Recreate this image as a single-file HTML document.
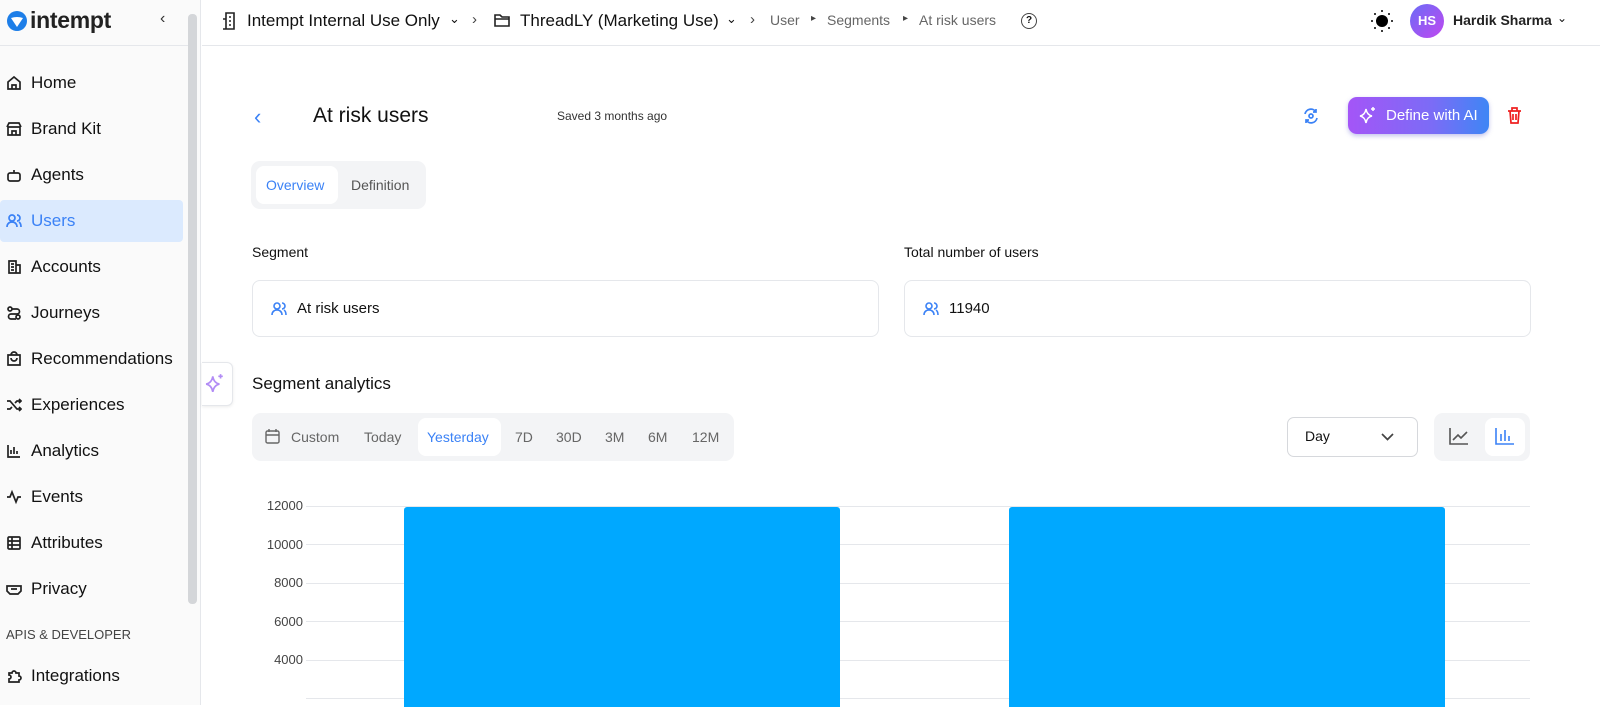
<!DOCTYPE html>
<html><head><meta charset="utf-8"><style>
*{box-sizing:border-box;margin:0;padding:0}
body{width:1600px;height:705px;overflow:hidden;background:#fff;font-family:"Liberation Sans",sans-serif;color:#111;position:relative}
.abs{position:absolute}
.side{left:0;top:0;width:201px;height:705px;background:#fafafa;border-right:1px solid #e5e7eb}
.nav{position:absolute;left:0;width:183px;height:42px;display:flex;align-items:center;font-size:17px;color:#111;padding-left:6px}
.nav svg{width:16px;height:16px;margin-right:9px;stroke:#222;fill:none;stroke-width:1.7}
.nav.act{background:#dbeafe;color:#3b82f6;border-radius:4px}
.nav.act svg{stroke:#3b82f6}
.t{position:absolute;white-space:nowrap}
.box{position:absolute;border:1px solid #e5e7eb;border-radius:8px;height:57px;display:flex;align-items:center;padding-left:18px;font-size:15px}
.box svg{width:16px;height:16px;stroke:#3b82f6;fill:none;stroke-width:1.6;margin-right:10px}
.grid{position:absolute;left:306px;width:1224px;height:1px;background:#e5e7eb}
.yl{position:absolute;right:1297px;font-size:13px;color:#444}
</style></head><body>
<div class="abs side">
  <svg class="abs" style="left:6px;top:10px" width="22" height="22" viewBox="0 0 22 22"><circle cx="11" cy="11" r="10" fill="#1d7ee8"/><path d="M5 8 Q11 6 17 8 L11 17Z" fill="#fff"/></svg>
  <div class="t" style="left:30px;top:7px;font-size:23px;font-weight:bold;color:#222;letter-spacing:-0.3px">intempt</div>
  <div class="t" style="left:160px;top:10px;font-size:16px;color:#333">‹</div>
  <div class="abs" style="left:0;top:45px;width:188px;height:1px;background:#e5e7eb"></div>
  <div class="abs" style="left:188px;top:14px;width:9px;height:590px;background:#d4d6d9;border-radius:4px"></div>
  <div class="nav" style="top:62px"><svg viewBox="0 0 16 16"><path d="M2 7L8 2l6 5v7H2z M6 14v-4h4v4"/></svg>Home</div>
  <div class="nav" style="top:108px"><svg viewBox="0 0 16 16"><path d="M2 6h12v8H2z M1 6l2-4h10l2 4 M6 14v-4h4v4"/></svg>Brand Kit</div>
  <div class="nav" style="top:154px"><svg viewBox="0 0 16 16"><rect x="2" y="6" width="12" height="8" rx="2"/><path d="M8 3v3 M6 10h0 M10 10h0"/></svg>Agents</div>
  <div class="nav act" style="top:200px"><svg viewBox="0 0 16 16"><circle cx="6" cy="5" r="3"/><path d="M1 14c0-3 2-5 5-5s5 2 5 5 M11 2a3 3 0 010 6 M13 9c1.5 1 2 3 2 5"/></svg>Users</div>
  <div class="nav" style="top:246px"><svg viewBox="0 0 16 16"><path d="M3 2h7v12H3z M10 6h4v8h-4 M5 5h3 M5 8h3 M5 11h3"/></svg>Accounts</div>
  <div class="nav" style="top:292px"><svg viewBox="0 0 16 16"><circle cx="4" cy="4" r="2"/><circle cx="12" cy="12" r="2"/><path d="M6 4h5a2.5 2.5 0 010 5H5a2.5 2.5 0 000 5h5"/></svg>Journeys</div>
  <div class="nav" style="top:338px"><svg viewBox="0 0 16 16"><path d="M2 4h12v10H2z M5 4a3 3 0 016 0 M5 7a3 3 0 006 0"/></svg>Recommendations</div>
  <div class="nav" style="top:384px"><svg viewBox="0 0 16 16"><path d="M1 4h3l7 8h4 M1 12h3l2-2 M9 6l2-2h4 M13 2l2 2-2 2 M13 10l2 2-2 2"/></svg>Experiences</div>
  <div class="nav" style="top:430px"><svg viewBox="0 0 16 16"><path d="M2 2v12h12 M5 11V7 M8 11V4 M11 11V8"/></svg>Analytics</div>
  <div class="nav" style="top:476px"><svg viewBox="0 0 16 16"><path d="M1 8h3l2-5 4 10 2-5h3"/></svg>Events</div>
  <div class="nav" style="top:522px"><svg viewBox="0 0 16 16"><rect x="2" y="2" width="12" height="12" rx="1"/><path d="M2 6h12 M2 10h12 M6 2v12"/></svg>Attributes</div>
  <div class="nav" style="top:568px"><svg viewBox="0 0 16 16"><path d="M1 5h14v5l-3 3H4l-3-3z M5 8h6"/></svg>Privacy</div>
  <div class="t" style="left:6px;top:627px;font-size:13px;color:#444">APIS &amp; DEVELOPER</div>
  <div class="nav" style="top:655px"><svg viewBox="0 0 16 16"><path d="M3 5h3a2 2 0 014 0h3v3a2 2 0 010 4v2H3v-3a2 2 0 000-4z"/></svg>Integrations</div>
</div>

<div class="abs" style="left:202px;top:45px;width:1398px;height:1px;background:#e5e7eb"></div>
<svg class="abs" style="left:222px;top:12px" width="16" height="18" viewBox="0 0 16 18" fill="none" stroke="#222" stroke-width="1.6"><path d="M4 1h8v16H4z M1 7h3v10H1 M7 5h2 M7 9h2 M7 13h2"/></svg>
<div class="t" style="left:247px;top:11px;font-size:17px">Intempt Internal Use Only</div>
<div class="t" style="left:449px;top:11px;font-size:13px">⌄</div>
<div class="t" style="left:472px;top:11px;font-size:15px;color:#444">›</div>
<svg class="abs" style="left:494px;top:13px" width="17" height="15" viewBox="0 0 17 15" fill="none" stroke="#222" stroke-width="1.6"><path d="M1 2h5l2 2h7v9H1z M1 6h14"/></svg>
<div class="t" style="left:520px;top:11px;font-size:17px">ThreadLY (Marketing Use)</div>
<div class="t" style="left:726px;top:11px;font-size:13px">⌄</div>
<div class="t" style="left:750px;top:11px;font-size:15px;color:#444">›</div>
<div class="t" style="left:770px;top:12px;font-size:14px;color:#666">User</div>
<div class="t" style="left:811px;top:13px;font-size:10px;color:#444">▸</div>
<div class="t" style="left:827px;top:12px;font-size:14px;color:#666">Segments</div>
<div class="t" style="left:903px;top:13px;font-size:10px;color:#444">▸</div>
<div class="t" style="left:919px;top:12px;font-size:14px;color:#666">At risk users</div>
<div class="abs" style="left:1021px;top:13px;width:16px;height:16px;border:1.5px solid #444;border-radius:50%;font-size:10px;text-align:center;line-height:13px;font-weight:bold">?</div>
<svg class="abs" style="left:1370px;top:9px" width="24" height="24" viewBox="0 0 24 24"><circle cx="12" cy="12" r="6" fill="#000"/><g fill="#000"><circle cx="12" cy="2" r="1"/><circle cx="12" cy="22" r="1"/><circle cx="2" cy="12" r="1"/><circle cx="22" cy="12" r="1"/><circle cx="5" cy="5" r="1"/><circle cx="19" cy="19" r="1"/><circle cx="5" cy="19" r="1"/><circle cx="19" cy="5" r="1"/></g></svg>
<div class="abs" style="left:1410px;top:4px;width:34px;height:34px;border-radius:50%;background:linear-gradient(135deg,#6b6cf6,#c048f0);color:#fff;font-size:13px;font-weight:bold;text-align:center;line-height:34px">HS</div>
<div class="t" style="left:1453px;top:12px;font-size:14px;font-weight:bold;color:#222">Hardik Sharma</div>
<div class="t" style="left:1557px;top:11px;font-size:12px">⌄</div>

<div class="t" style="left:254px;top:104px;font-size:22px;color:#3b82f6">‹</div>
<div class="t" style="left:313px;top:104px;font-size:21px;color:#111">At risk users</div>
<div class="t" style="left:557px;top:109px;font-size:12px;color:#333">Saved 3 months ago</div>
<svg class="abs" style="left:1303px;top:108px" width="16" height="16" viewBox="0 0 16 16" fill="none" stroke="#3b82f6" stroke-width="1.7"><path d="M2 6a6 6 0 0111-2 M14 10a6 6 0 01-11 2 M13 1v3h-3 M3 15v-3h3"/><circle cx="8" cy="8" r="2"/></svg>
<div class="abs" style="left:1348px;top:97px;width:141px;height:37px;border-radius:9px;background:linear-gradient(90deg,#a455f7,#7b6cf6 60%,#3e86f5);box-shadow:0 2px 5px rgba(80,80,200,.35);color:#fff;font-size:15px;line-height:37px;padding-left:38px">Define with AI</div>
<svg class="abs" style="left:1359px;top:106px" width="18" height="18" viewBox="0 0 18 18" fill="none" stroke="#fff" stroke-width="1.5"><path d="M7 3 Q8 9 13 10 Q8 11 7 17 Q6 11 1 10 Q6 9 7 3Z M14 1v4 M12 3h4"/></svg>
<svg class="abs" style="left:1507px;top:107px" width="15" height="17" viewBox="0 0 15 17" fill="none" stroke="#ef2020" stroke-width="1.7"><path d="M1 4h13 M5 4V1h5v3 M3 4l1 12h7l1-12 M6 7v6 M9 7v6"/></svg>

<div class="abs" style="left:251px;top:161px;width:175px;height:48px;background:#f3f4f6;border-radius:9px"></div>
<div class="abs" style="left:256px;top:166px;width:82px;height:38px;background:#fff;border-radius:8px"></div>
<div class="t" style="left:266px;top:177px;font-size:14px;color:#3b82f6">Overview</div>
<div class="t" style="left:351px;top:177px;font-size:14px;color:#555">Definition</div>

<div class="t" style="left:252px;top:244px;font-size:14px">Segment</div>
<div class="t" style="left:904px;top:244px;font-size:14px">Total number of users</div>
<div class="box" style="left:252px;top:280px;width:627px"><svg viewBox="0 0 16 16"><circle cx="6" cy="5" r="3"/><path d="M1 14c0-3 2-5 5-5s5 2 5 5 M11 2a3 3 0 010 6 M13 9c1.5 1 2 3 2 5"/></svg>At risk users</div>
<div class="box" style="left:904px;top:280px;width:627px"><svg viewBox="0 0 16 16"><circle cx="6" cy="5" r="3"/><path d="M1 14c0-3 2-5 5-5s5 2 5 5 M11 2a3 3 0 010 6 M13 9c1.5 1 2 3 2 5"/></svg>11940</div>

<div class="abs" style="left:202px;top:362px;width:31px;height:44px;background:#fff;border:1px solid #e5e7eb;border-left:none;border-radius:0 6px 6px 0;box-shadow:0 1px 3px rgba(0,0,0,.08)"></div>
<svg class="abs" style="left:205px;top:373px" width="20" height="20" viewBox="0 0 18 18" fill="none" stroke="#b28cf5" stroke-width="1.5"><path d="M7 3 Q8 9 13 10 Q8 11 7 17 Q6 11 1 10 Q6 9 7 3Z M14 1v4 M12 3h4"/></svg>

<div class="t" style="left:252px;top:374px;font-size:17px">Segment analytics</div>
<div class="abs" style="left:252px;top:413px;width:482px;height:48px;background:#f3f4f6;border-radius:9px"></div>
<div class="abs" style="left:418px;top:418px;width:83px;height:38px;background:#fff;border-radius:8px"></div>
<svg class="abs" style="left:265px;top:428px" width="15" height="16" viewBox="0 0 15 16" fill="none" stroke="#666" stroke-width="1.4"><rect x="1" y="3" width="13" height="12" rx="1.5"/><path d="M1 7h13 M4 1v3 M11 1v3"/></svg>
<div class="t" style="left:291px;top:429px;font-size:14px;color:#666">Custom</div>
<div class="t" style="left:364px;top:429px;font-size:14px;color:#666">Today</div>
<div class="t" style="left:427px;top:429px;font-size:14px;color:#3b82f6">Yesterday</div>
<div class="t" style="left:515px;top:429px;font-size:14px;color:#666">7D</div>
<div class="t" style="left:556px;top:429px;font-size:14px;color:#666">30D</div>
<div class="t" style="left:605px;top:429px;font-size:14px;color:#666">3M</div>
<div class="t" style="left:648px;top:429px;font-size:14px;color:#666">6M</div>
<div class="t" style="left:692px;top:429px;font-size:14px;color:#666">12M</div>

<div class="abs" style="left:1287px;top:417px;width:131px;height:40px;border:1px solid #d6d8dc;border-radius:7px"></div>
<div class="t" style="left:1305px;top:428px;font-size:14px">Day</div>
<svg class="abs" style="left:1381px;top:433px" width="13" height="8" viewBox="0 0 13 8" fill="none" stroke="#444" stroke-width="1.7"><path d="M1 1l5.5 5.5L12 1"/></svg>
<div class="abs" style="left:1434px;top:413px;width:96px;height:48px;background:#f3f4f6;border-radius:9px"></div>
<div class="abs" style="left:1485px;top:418px;width:40px;height:38px;background:#fff;border-radius:8px"></div>
<svg class="abs" style="left:1449px;top:427px" width="20" height="18" viewBox="0 0 20 18" fill="none" stroke="#555" stroke-width="1.6"><path d="M1 1v16h18 M4 13l5-5 3 3 6-6"/></svg>
<svg class="abs" style="left:1495px;top:427px" width="20" height="18" viewBox="0 0 20 18" fill="none" stroke="#3b82f6" stroke-width="1.6"><path d="M1 1v16h18 M6 14V7 M10 14V3 M14 14V9"/></svg>

<div class="grid" style="top:506px"></div>
<div class="grid" style="top:544px"></div>
<div class="grid" style="top:583px"></div>
<div class="grid" style="top:621px"></div>
<div class="grid" style="top:660px"></div>
<div class="grid" style="top:698px"></div>
<div class="yl" style="top:498px">12000</div>
<div class="yl" style="top:537px">10000</div>
<div class="yl" style="top:575px">8000</div>
<div class="yl" style="top:614px">6000</div>
<div class="yl" style="top:652px">4000</div>
<div class="abs" style="left:404px;top:507px;width:436px;height:200px;background:#00a8ff;border-radius:3px 3px 0 0"></div>
<div class="abs" style="left:1009px;top:507px;width:436px;height:200px;background:#00a8ff;border-radius:3px 3px 0 0"></div>
</body></html>
